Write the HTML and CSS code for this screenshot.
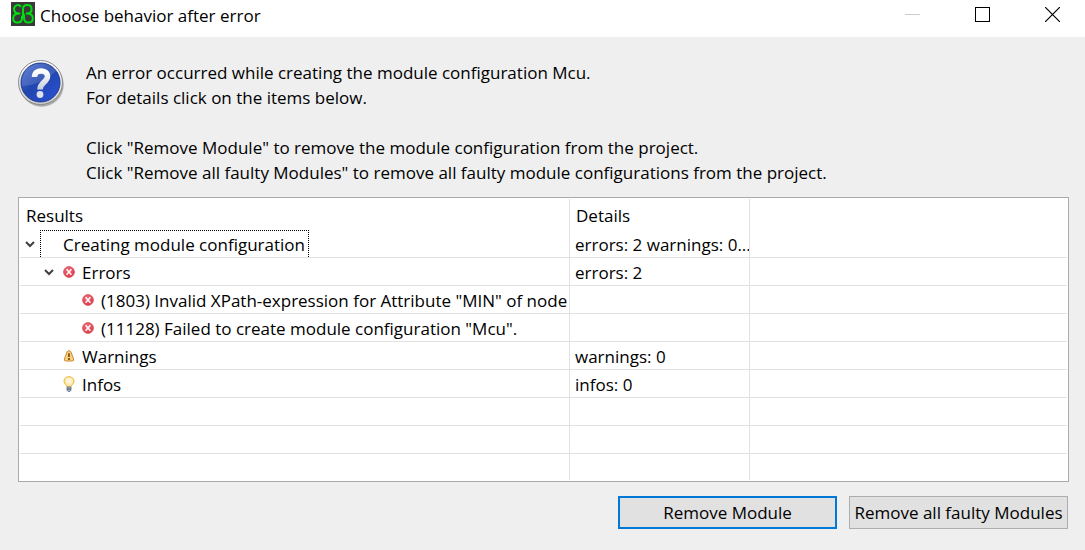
FILE: index.html
```html
<!DOCTYPE html>
<html lang="en">
<head>
  <meta charset="UTF-8" />
  <title>Choose behavior after error</title>
  <link rel="stylesheet" href="styles.css">
</head>
<body>

  <!-- shared icons -->
  <svg class="defs" width="0" height="0" aria-hidden="true">
    <defs>
      <radialGradient id="redFill" cx="0.4" cy="0.3" r="0.8">
        <stop offset="0" stop-color="#f0707a" />
        <stop offset="1" stop-color="#d93443" />
      </radialGradient>
      <linearGradient id="blueFill" x1="0" y1="0" x2="1" y2="1">
        <stop offset="0" stop-color="#4a6fd0" />
        <stop offset="0.45" stop-color="#2146ae" />
        <stop offset="1" stop-color="#2b50d8" />
      </linearGradient>
      <linearGradient id="rimFill" x1="0" y1="0" x2="0" y2="1">
        <stop offset="0" stop-color="#ffffff" />
        <stop offset="1" stop-color="#cfcfcf" />
      </linearGradient>
      <linearGradient id="markFill" x1="0" y1="0" x2="0" y2="1">
        <stop offset="0" stop-color="#ffffff" />
        <stop offset="1" stop-color="#c9cedb" />
      </linearGradient>
      <radialGradient id="bulbFill" cx="0.5" cy="0.4" r="0.6">
        <stop offset="0" stop-color="#fffef0" />
        <stop offset="1" stop-color="#fbe08a" />
      </radialGradient>
      <symbol id="chevron" viewBox="0 0 10 8">
        <path d="M1 2l4 4 4-4" fill="none" stroke="#404040" stroke-width="2" />
      </symbol>
      <symbol id="error" viewBox="0 0 12 12">
        <circle cx="6" cy="6" r="5.4" fill="url(#redFill)" stroke="#d64a55" stroke-width="0.8" />
        <path d="M3.6 3.2l4.8 5.6M8.4 3.2L3.6 8.8" stroke="#fff" stroke-width="1.4" />
      </symbol>
    </defs>
  </svg>

  <div class="dialog">
    <div class="titlebar">
      <svg class="app-icon" viewBox="0 0 24 24" aria-hidden="true">
        <rect width="24" height="24" fill="#3a3a3a" />
        <path d="M9.5 4.2C7.5 2.2 3.2 3 3 7C3 9.8 5 11.5 8.5 11.5C4.5 11.5 2.2 13.2 2.2 16.2C2.2 19 4 20.6 6.6 20.6C9.5 20.6 11 18.8 11 16V14.5M12 15V7C12 4.5 13.8 3 16.2 3C19 3 20.6 4.8 20.6 7.2C20.6 9.8 18.8 11.5 15.5 11.5C19.5 11.5 21.8 13.2 21.8 16.2C21.8 19 20 20.6 17.4 20.6C14.8 20.6 13 19 13 16V13" fill="none" stroke="#00e010" stroke-width="2" stroke-linecap="round" stroke-linejoin="round" />
      </svg>
      <h1 class="title">Choose behavior after error</h1>
      <div class="window-buttons">
        <button type="button" aria-label="Minimize" disabled>
          <svg viewBox="0 0 15 15"><path d="M0 7.5h15" stroke="#cccccc" /></svg>
        </button>
        <button type="button" aria-label="Maximize">
          <svg viewBox="0 0 15 15"><rect x="0.5" y="0.5" width="14" height="14" fill="none" stroke="#000" /></svg>
        </button>
        <button type="button" aria-label="Close">
          <svg viewBox="0 0 15 15"><path d="M0 0l15 15M15 0L0 15" stroke="#000" stroke-width="1.2" /></svg>
        </button>
      </div>
    </div>

    <div class="message">
      <svg class="question" viewBox="0 0 48 48" aria-hidden="true">
        <circle cx="24" cy="25" r="22" fill="#000" opacity="0.12" />
        <circle cx="23.5" cy="24.5" r="22" fill="#000" opacity="0.2" />
        <circle cx="22.5" cy="22.5" r="22" fill="url(#rimFill)" stroke="#8a8a8a" />
        <circle cx="22.5" cy="22.5" r="19.5" fill="url(#blueFill)" stroke="#1c3a8c" />
        <path d="M4 26C14 26 28 21 38 11C32 3 20 1 11 7C5 12 3 19 4 26z" fill="#fff" opacity="0.13" />
        <path d="M16.5 17C16.5 9 29.5 9 29.5 16.5C29.5 22 22 22.5 22 29.5" fill="none" stroke="url(#markFill)" stroke-width="5.5" />
        <circle cx="22" cy="34.5" r="3.4" fill="#dfe2ea" />
      </svg>
      <div class="message-text">
        <p>An error occurred while creating the module configuration Mcu.<br>
        For details click on the items below.</p>
        <p>Click "Remove Module" to remove the module configuration from the project.<br>
        Click "Remove all faulty Modules" to remove all faulty module configurations from the project.</p>
      </div>
    </div>

    <div class="results">
      <table>
        <colgroup>
          <col class="col-results">
          <col class="col-details">
          <col>
        </colgroup>
        <thead>
          <tr><th>Results</th><th>Details</th><th></th></tr>
        </thead>
        <tbody>
          <tr>
            <td>
              <div class="node">
                <button type="button" class="toggle" aria-label="Collapse"><svg><use href="#chevron" /></svg></button>
                <span class="focused">Creating module configuration</span>
              </div>
            </td>
            <td>errors: 2 warnings: 0...</td>
            <td></td>
          </tr>
          <tr>
            <td>
              <div class="node level-1">
                <button type="button" class="toggle" aria-label="Collapse"><svg><use href="#chevron" /></svg></button>
                <svg class="icon"><use href="#error" /></svg>
                <span class="label">Errors</span>
              </div>
            </td>
            <td>errors: 2</td>
            <td></td>
          </tr>
          <tr>
            <td>
              <div class="node level-2 leaf">
                <svg class="icon"><use href="#error" /></svg>
                <span class="label">(1803) Invalid XPath-expression for Attribute "MIN" of node</span>
              </div>
            </td>
            <td></td>
            <td></td>
          </tr>
          <tr>
            <td>
              <div class="node level-2 leaf">
                <svg class="icon"><use href="#error" /></svg>
                <span class="label">(11128) Failed to create module configuration "Mcu".</span>
              </div>
            </td>
            <td></td>
            <td></td>
          </tr>
          <tr>
            <td>
              <div class="node level-1 leaf">
                <svg class="icon" viewBox="0 0 12 12">
                  <path d="M4.2 1.6Q6 -0.4 7.8 1.6L10.6 9Q11 11 9.4 11H2.6Q1 11 1.4 9z" fill="#fbd07a" stroke="#c98a35" />
                  <path d="M6 3.2v3.8M6 8v2" stroke="#6b4510" stroke-width="1.6" />
                </svg>
                <span class="label">Warnings</span>
              </div>
            </td>
            <td>warnings: 0</td>
            <td></td>
          </tr>
          <tr>
            <td>
              <div class="node level-1 leaf">
                <svg class="icon bulb" viewBox="0 0 12 16">
                  <path d="M4 11C4 9 1 8 1 5.2C1 2.4 3.2 0.7 6 0.7S11 2.4 11 5.2C11 8 8 9 8 11z" fill="url(#bulbFill)" stroke="#edb43c" />
                  <path d="M4 11h4v3.2L7 15.4H5L4 14.2z" fill="#a9b8c8" stroke="#5d6f86" stroke-width="0.8" />
                  <path d="M4 13h4" stroke="#44566e" />
                </svg>
                <span class="label">Infos</span>
              </div>
            </td>
            <td>infos: 0</td>
            <td></td>
          </tr>
          <tr><td></td><td></td><td></td></tr>
          <tr><td></td><td></td><td></td></tr>
          <tr><td></td><td></td><td></td></tr>
        </tbody>
      </table>
    </div>

    <div class="actions">
      <button type="button" class="btn default">Remove Module</button>
      <button type="button" class="btn">Remove all faulty Modules</button>
    </div>
  </div>

</body>
</html>
```

FILE: styles.css
```css
* {
  box-sizing: border-box;
}

body {
  margin: 0;
  min-height: 100vh;
  background-color: #efefef;
  color: #000;
  font-family: "Open Sans", "Noto Sans", sans-serif;
  font-size: 17px;
  line-height: 25px;
}

button {
  font: inherit;
  color: inherit;
  padding: 0;
}

.defs {
  position: absolute;
}

.titlebar {
  display: flex;
  align-items: flex-start;
  height: 37px;
  padding: 2px 0 0 11px;
  background-color: #fff;
}

.app-icon {
  width: 24px;
  height: 24px;
}

.title {
  flex-grow: 1;
  margin: 0 0 0 5px;
  padding-top: 1px;
  font-size: 17px;
  font-weight: normal;
}

.window-buttons {
  display: flex;
  gap: 4px;
}

.window-buttons button {
  display: flex;
  align-items: center;
  justify-content: center;
  width: 66px;
  height: 25px;
  border: 0;
  background: none;
}

.window-buttons svg {
  width: 15px;
  height: 15px;
}

.message {
  display: flex;
  gap: 20px;
  padding: 23px 18px 0;
}

.question {
  flex-shrink: 0;
  width: 48px;
  height: 48px;
}

.message-text p {
  margin: 0 0 25px;
}

.message-text p:last-child {
  margin-bottom: 12px;
}

.results {
  margin: 0 16px 0 18px;
  padding: 1px;
  border: 1px solid #a9abb1;
  background-color: #fff;
}

table {
  width: 100%;
  table-layout: fixed;
  border-collapse: separate;
  border-spacing: 0;
}

.col-results {
  width: 550px;
}

.col-details {
  width: 180px;
}

th {
  height: 31px;
  padding: 2px 6px 0;
  text-align: left;
  font-weight: normal;
}

td {
  height: 28px;
  padding: 2px 0 0 5px;
  border-bottom: 1px solid #e2e2e2;
  overflow: hidden;
  white-space: nowrap;
}

td:first-child {
  padding: 0;
}

th:not(:last-child),
td:not(:last-child) {
  border-right: 1px solid #e2e2e2;
}

tr:last-child td {
  height: 26px;
  border-bottom: 0;
}

.node {
  display: flex;
  align-items: center;
  height: 27px;
  padding-left: 5px;
  overflow: hidden;
}

.node.level-1 {
  padding-left: 24px;
}

.node.level-2 {
  padding-left: 43px;
}

.node.leaf::before {
  content: "";
  flex-shrink: 0;
  width: 19px;
}

.toggle {
  display: flex;
  flex-shrink: 0;
  width: 15px;
  margin-right: 4px;
  border: 0;
  background: none;
}

.toggle svg {
  width: 10px;
  height: 8px;
}

.label {
  padding-top: 2px;
}

.focused {
  height: 27px;
  margin-left: -4px;
  padding: 1px 3px 0 22px;
  border: 1px dotted #000;
  border-bottom: 0;
}

.icon {
  flex-shrink: 0;
  width: 12px;
  height: 12px;
  margin-right: 7px;
}

.icon.bulb {
  height: 16px;
}

.actions {
  display: flex;
  justify-content: flex-end;
  gap: 12px;
  padding: 14px 17px 20px;
}

.btn {
  width: 219px;
  height: 33px;
  border: 1px solid #adadad;
  background-color: #e1e1e1;
  white-space: nowrap;
}

.btn.default {
  border: 2px solid #0078d7;
}
```
